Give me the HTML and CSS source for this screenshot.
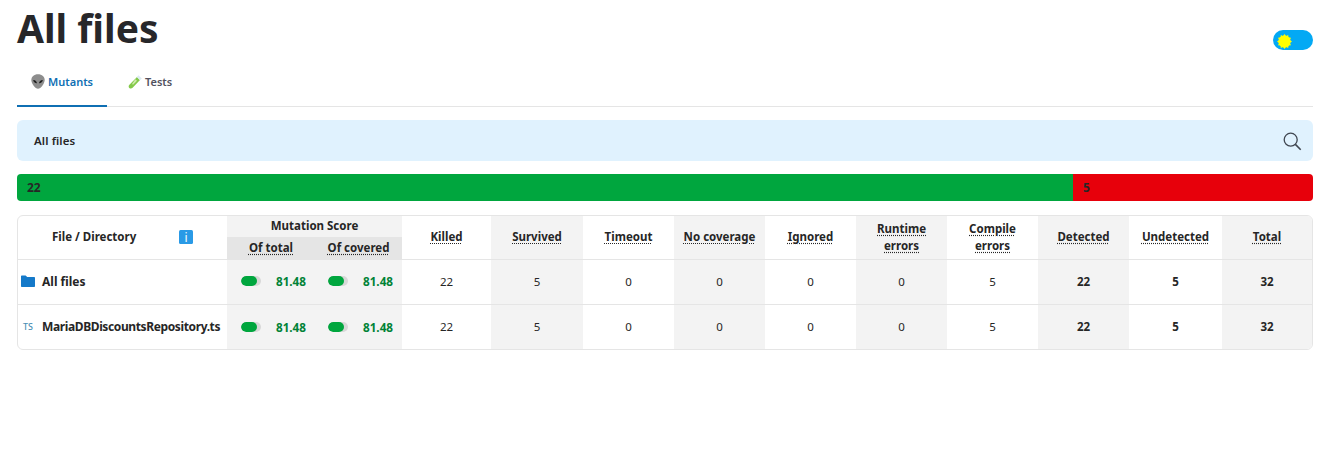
FILE: index.html
```html
<!DOCTYPE html>
<html lang="en">
<head>
<meta charset="utf-8">
<title>All files</title>
<link rel="stylesheet" href="styles.css">
</head>
<body>
<div class="page">
  <header class="top">
    <h1 class="title">All files</h1>
    <button class="toggle" aria-label="Theme">
      <svg class="sun" width="15" height="15" viewBox="0 0 15 15"><circle cx="7.5" cy="7.500" r="6" fill="#ffff00"/><polygon fill="#ffff00" points="7.500,0 9,2 11.200,1 11.500,3.500 14,3.800 13,6 15,7.500 13,9 14,11.200 11.500,11.500 11.200,14 9,13 7.500,15 6,13 3.800,14 3.500,11.500 1,11.200 2,9 0,7.500 2,6 1,3.800 3.500,3.500 3.800,1 6,2"/></svg>
    </button>
  </header>
  <nav class="tabs">
    <a class="tab active">
      <svg class="emoji" width="14" height="15" viewBox="0 0 14 15"><path fill="#8d8d8d" d="M7 .2C3 .2.300 2.900.300 6c0 3.300 4 8.800 6.700 8.800s6.700-5.500 6.700-8.800C13.700 2.900 11 .2 7 .2z"/><path fill="#1f1f1f" d="M2.200 6c1.900-.2 3.600 1.200 3.800 3.200C4 9.300 2.300 8 2.200 6zM11.800 6C9.900 5.800 8.200 7.200 8 9.200c2 .1 3.700-1.200 3.800-3.200z"/></svg>
      Mutants
    </a>
    <a class="tab">
      <svg class="emoji" width="14" height="14" viewBox="0 0 14 14"><path fill="#84c94a" d="M9 2l3 3-7.400 7.800c-.9.900-2.400.9-3.300.1-.9-.9-.8-2.300.1-3.200z"/><path fill="#dcecf3" d="M8.800 2l1.700-1.800 3.300 3.300L12 5.200z"/><path fill="#cdeaaa" d="M7.200 4.200L9 5.800 5.400 9.500l-1.500-.2z"/></svg>
      Tests
    </a>
  </nav>
  <div class="crumb">
    <span class="crumb-t">All files</span>
    <svg class="search" width="20" height="20" viewBox="0 0 20 20" fill="none" stroke="#3f4650" stroke-width="1.300"><circle cx="8.700" cy="8.700" r="6.500"/><path d="M13.400 13.400l5.300 5.300" stroke-width="1.600"/></svg>
  </div>
  <div class="bar">
    <div class="seg ok" style="width: 81.48%">22</div>
    <div class="seg bad" style="width: 18.52%">5</div>
  </div>
  <div class="table-wrap">
    <table class="grid">
      <colgroup>
        <col class="c-file"><col class="c-score"><col class="c-score2"><col class="c-killed"><col class="c-s"><col class="c-m"><col class="c-m"><col class="c-m"><col class="c-m"><col class="c-m"><col class="c-m"><col class="c-und"><col class="c-total">
      </colgroup>
      <thead>
        <tr class="h1">
          <th rowspan="2" class="file-h"><span class="file-h-in"><span class="file-h-t">File / Directory</span>
            <svg class="info" width="14" height="14" viewBox="0 0 14 14"><rect width="14" height="14" rx="1.500" fill="#2a9ae6"/><text x="7" y="11.500" text-anchor="middle" class="info-i">i</text></svg></span></th>
          <th colspan="2" class="shade ms">Mutation Score</th>
          <th rowspan="2"><abbr>Killed</abbr></th>
          <th rowspan="2" class="shade"><abbr>Survived</abbr></th>
          <th rowspan="2"><abbr>Timeout</abbr></th>
          <th rowspan="2" class="shade"><abbr>No coverage</abbr></th>
          <th rowspan="2"><abbr>Ignored</abbr></th>
          <th rowspan="2" class="shade"><abbr>Runtime errors</abbr></th>
          <th rowspan="2"><abbr>Compile errors</abbr></th>
          <th rowspan="2" class="shade"><abbr>Detected</abbr></th>
          <th rowspan="2"><abbr>Undetected</abbr></th>
          <th rowspan="2" class="shade"><abbr>Total</abbr></th>
        </tr>
        <tr class="h2">
          <th class="dark"><abbr>Of total</abbr></th>
          <th class="dark"><abbr>Of covered</abbr></th>
        </tr>
      </thead>
      <tbody>
        <tr>
          <td class="name"><span class="name-in"><svg class="ficon" width="14" height="14" viewBox="0 0 14 14"><path fill="#1479c9" d="M0 2.500C0 1.900.4 1.500 1 1.500h3.600l1.600 1.600H13c.6 0 1 .4 1 1v8c0 .6-.4 1-1 1H1c-.6 0-1-.4-1-1z"/></svg>All files</span></td>
          <td class="shade score"><span class="score-in"><span class="pill"><span class="pill-fill" style="width: 81.48%"></span></span><b>81.48</b></span></td>
          <td class="shade score"><span class="score-in"><span class="pill"><span class="pill-fill" style="width: 81.48%"></span></span><b>81.48</b></span></td>
          <td>22</td><td class="shade">5</td><td>0</td><td class="shade">0</td><td>0</td><td class="shade">0</td><td>5</td>
          <td class="shade strong">22</td><td class="strong">5</td><td class="shade strong">32</td>
        </tr>
        <tr>
          <td class="name"><span class="name-in"><span class="ts">TS</span><span class="long">MariaDBDiscountsRepository.ts</span></span></td>
          <td class="shade score"><span class="score-in"><span class="pill"><span class="pill-fill" style="width: 81.48%"></span></span><b>81.48</b></span></td>
          <td class="shade score"><span class="score-in"><span class="pill"><span class="pill-fill" style="width: 81.48%"></span></span><b>81.48</b></span></td>
          <td>22</td><td class="shade">5</td><td>0</td><td class="shade">0</td><td>0</td><td class="shade">0</td><td>5</td>
          <td class="shade strong">22</td><td class="strong">5</td><td class="shade strong">32</td>
        </tr>
      </tbody>
    </table>
  </div>
</div>
</body>
</html>
```

FILE: styles.css
```css
* { box-sizing: border-box; }
html, body { margin: 0; background: #fff; }
body { font-family: "Noto Sans", "Open Sans", sans-serif; color: #262626; font-size: 12px; }
.page { padding: 0 14px 0 17px; }
.top { display: flex; justify-content: space-between; align-items: flex-start; height: 58px; }
.title { margin: 0; font-size: 39px; line-height: 55px; font-weight: 700; color: #27272a; }
.toggle { margin-top: 30px; width: 40px; height: 20px; border: 0; border-radius: 10px; background: #03a9f4; padding: 3px 0 0 4px; display: block; text-align: left; }
.sun { display: block; }
.tabs { display: flex; height: 49px; border-bottom: 1px solid #e5e5e5; }
.tab { display: flex; align-items: center; gap: 3px; height: 49px; padding: 0 14px 2px; font-weight: 600; font-size: 11px; color: #525260; margin-bottom: -1px; }
.tab:first-child { width: 90px; }
.tab:nth-child(2) { padding-left: 21px; }
.tab.active { color: #0f6fb3; border-bottom: 2px solid #0f6fb3; padding-bottom: 0; }
.emoji { flex: none; }
.crumb { display: flex; justify-content: space-between; align-items: center; height: 41px; margin-top: 13px; padding: 0 11px 0 17px; background: #e0f2fe; border-radius: 6px; font-weight: 600; font-size: 11.500px; }
.crumb-t { letter-spacing: .1px; }
.bar { display: flex; height: 27px; margin-top: 13px; border-radius: 4px; overflow: hidden; font-weight: 700; font-size: 12px; }
.seg { display: flex; align-items: center; padding-left: 10px; }
.ok { background: #00a63e; }
.bad { background: #e7000b; }
.table-wrap { margin-top: 14px; border: 1px solid #e5e5e5; border-radius: 6px; overflow: hidden; }
.grid { width: 100%; border-collapse: separate; border-spacing: 0; table-layout: fixed; }
.c-file { width: 209px; }
.c-score { width: 88px; }
.c-score2 { width: 87px; }
.c-killed { width: 89px; }
.c-s { width: 92px; }
.c-m { width: 91px; }
.c-und { width: 93px; }
.c-total { width: auto; }
th { font-weight: 700; font-size: 11.500px; text-align: center; padding: 0 8px 2px; line-height: 17px; border-bottom: 1px solid #e5e5e5; }
.h1 { height: 21px; }
.h2 { height: 23px; }
.ms { border-bottom: 0; }
.dark { background: #e5e5e5; padding: 0 0 2px; }
.shade { background: #f3f3f3; }
abbr { text-decoration: underline dotted; text-underline-offset: 2px; }
td { height: 45px; text-align: center; font-size: 11.500px; font-weight: 400; border-bottom: 1px solid #e5e5e5; padding: 0 0 2px; }
tbody tr:last-child td { border-bottom: 0; height: 44px; padding-bottom: 1px; }
.strong { font-weight: 700; }
.file-h-in { display: flex; justify-content: space-between; align-items: center; padding: 0 34px 0 34px; }
.file-h { padding: 0 0 2px; }
.info { flex: none; }
.info-i { fill: #fff; font-size: 12px; font-weight: 400; }
.name { text-align: left; font-weight: 700; font-size: 12px; }
.name-in { display: flex; align-items: center; padding-left: 3px; }
.ficon { flex: none; margin-right: 7px; }
.ts { width: 14px; margin-right: 7px; font-size: 9px; font-weight: 500; color: #4b8fb5; text-align: center; }
.long { letter-spacing: -0.38px; }
.score-in { display: flex; justify-content: space-between; align-items: center; padding: 0 9px 0 14px; }
.score + .score .score-in { padding-left: 13px; }
.pill { display: block; width: 20px; height: 10px; border-radius: 5px; background: #d8d8d8; overflow: hidden; }
.pill-fill { display: block; height: 100%; background: #00a63e; border-radius: 5px; }
.score b { color: #008236; font-size: 11.700px; }
```
